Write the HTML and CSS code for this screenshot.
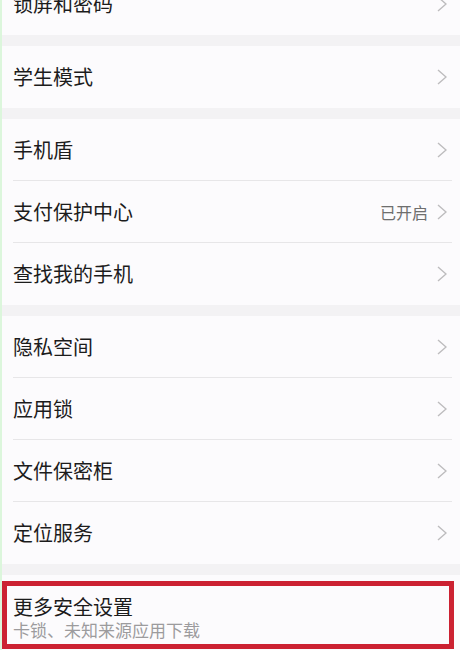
FILE: index.html
```html
<!DOCTYPE html>
<html lang="zh-CN">
<head>
<meta charset="utf-8">
<title>安全</title>
<link rel="stylesheet" href="styles.css">
</head>
<body>
<div class="page">
  <div class="list">
    <div class="group first">
      <div class="row"><span class="label">锁屏和密码</span><span class="right"><svg class="chev" viewBox="0 0 10 16"><path d="M1 1 L9 8 L1 15"/></svg></span></div>
    </div>
    <div class="group">
      <div class="row"><span class="label">学生模式</span><span class="right"><svg class="chev" viewBox="0 0 10 16"><path d="M1 1 L9 8 L1 15"/></svg></span></div>
    </div>
    <div class="group">
      <div class="row divided"><span class="label">手机盾</span><span class="right"><svg class="chev" viewBox="0 0 10 16"><path d="M1 1 L9 8 L1 15"/></svg></span></div>
      <div class="row divided"><span class="label">支付保护中心</span><span class="right"><span class="value">已开启</span><svg class="chev" viewBox="0 0 10 16"><path d="M1 1 L9 8 L1 15"/></svg></span></div>
      <div class="row"><span class="label">查找我的手机</span><span class="right"><svg class="chev" viewBox="0 0 10 16"><path d="M1 1 L9 8 L1 15"/></svg></span></div>
    </div>
    <div class="group">
      <div class="row divided"><span class="label">隐私空间</span><span class="right"><svg class="chev" viewBox="0 0 10 16"><path d="M1 1 L9 8 L1 15"/></svg></span></div>
      <div class="row divided"><span class="label">应用锁</span><span class="right"><svg class="chev" viewBox="0 0 10 16"><path d="M1 1 L9 8 L1 15"/></svg></span></div>
      <div class="row divided"><span class="label">文件保密柜</span><span class="right"><svg class="chev" viewBox="0 0 10 16"><path d="M1 1 L9 8 L1 15"/></svg></span></div>
      <div class="row"><span class="label">定位服务</span><span class="right"><svg class="chev" viewBox="0 0 10 16"><path d="M1 1 L9 8 L1 15"/></svg></span></div>
    </div>
    <div class="group last">
      <div class="highlight">
        <div class="title">更多安全设置</div>
        <div class="sub">卡锁、未知来源应用下载</div>
      </div>
    </div>
  </div>
</div>
</body>
</html>
```
FILE: styles.css
```css
html, body {
  margin: 0;
  padding: 0;
  background: #f3f2f4;
}
body {
  width: 460px;
  height: 650px;
  overflow: hidden;
  font-family: "Noto Sans CJK SC", "Noto Sans", sans-serif;
}
.page {
  height: 650px;
  border-left: 2px solid #dcf6dc;
  box-sizing: border-box;
  overflow: hidden;
}
.list {
  display: flex;
  flex-direction: column;
  gap: 11px;
  margin-top: -27px;
}
.group {
  background: #fcfbfd;
  display: flex;
  flex-direction: column;
}
.row {
  height: 62px;
  display: flex;
  align-items: center;
  justify-content: space-between;
  padding: 0 13px 0 11px;
  box-sizing: border-box;
  position: relative;
}
.row.divided::after {
  content: "";
  position: absolute;
  left: 11px;
  right: 8px;
  bottom: 0;
  height: 1px;
  background: #e7e6e8;
}
.label {
  font-size: 20px;
  color: #1c1c1c;
  line-height: 24px;
}
.right {
  display: flex;
  align-items: center;
  gap: 9px;
}
.value {
  font-size: 16px;
  color: #6e6e6e;
  line-height: 20px;
}
.chev {
  width: 10px;
  height: 16px;
  fill: none;
  stroke: #bdbcbe;
  stroke-width: 1.4;
}
.group.last {
  padding: 6px 6px 0 0;
  height: 80px;
  box-sizing: border-box;
}
.highlight {
  border: 5px solid #cc2232;
  height: 68px;
  box-sizing: border-box;
  padding: 9px 0 0 6px;
}
.title {
  font-size: 20px;
  color: #1c1c1c;
  line-height: 24px;
}
.sub {
  font-size: 17px;
  color: #9c9b9d;
  line-height: 21px;
}
```
